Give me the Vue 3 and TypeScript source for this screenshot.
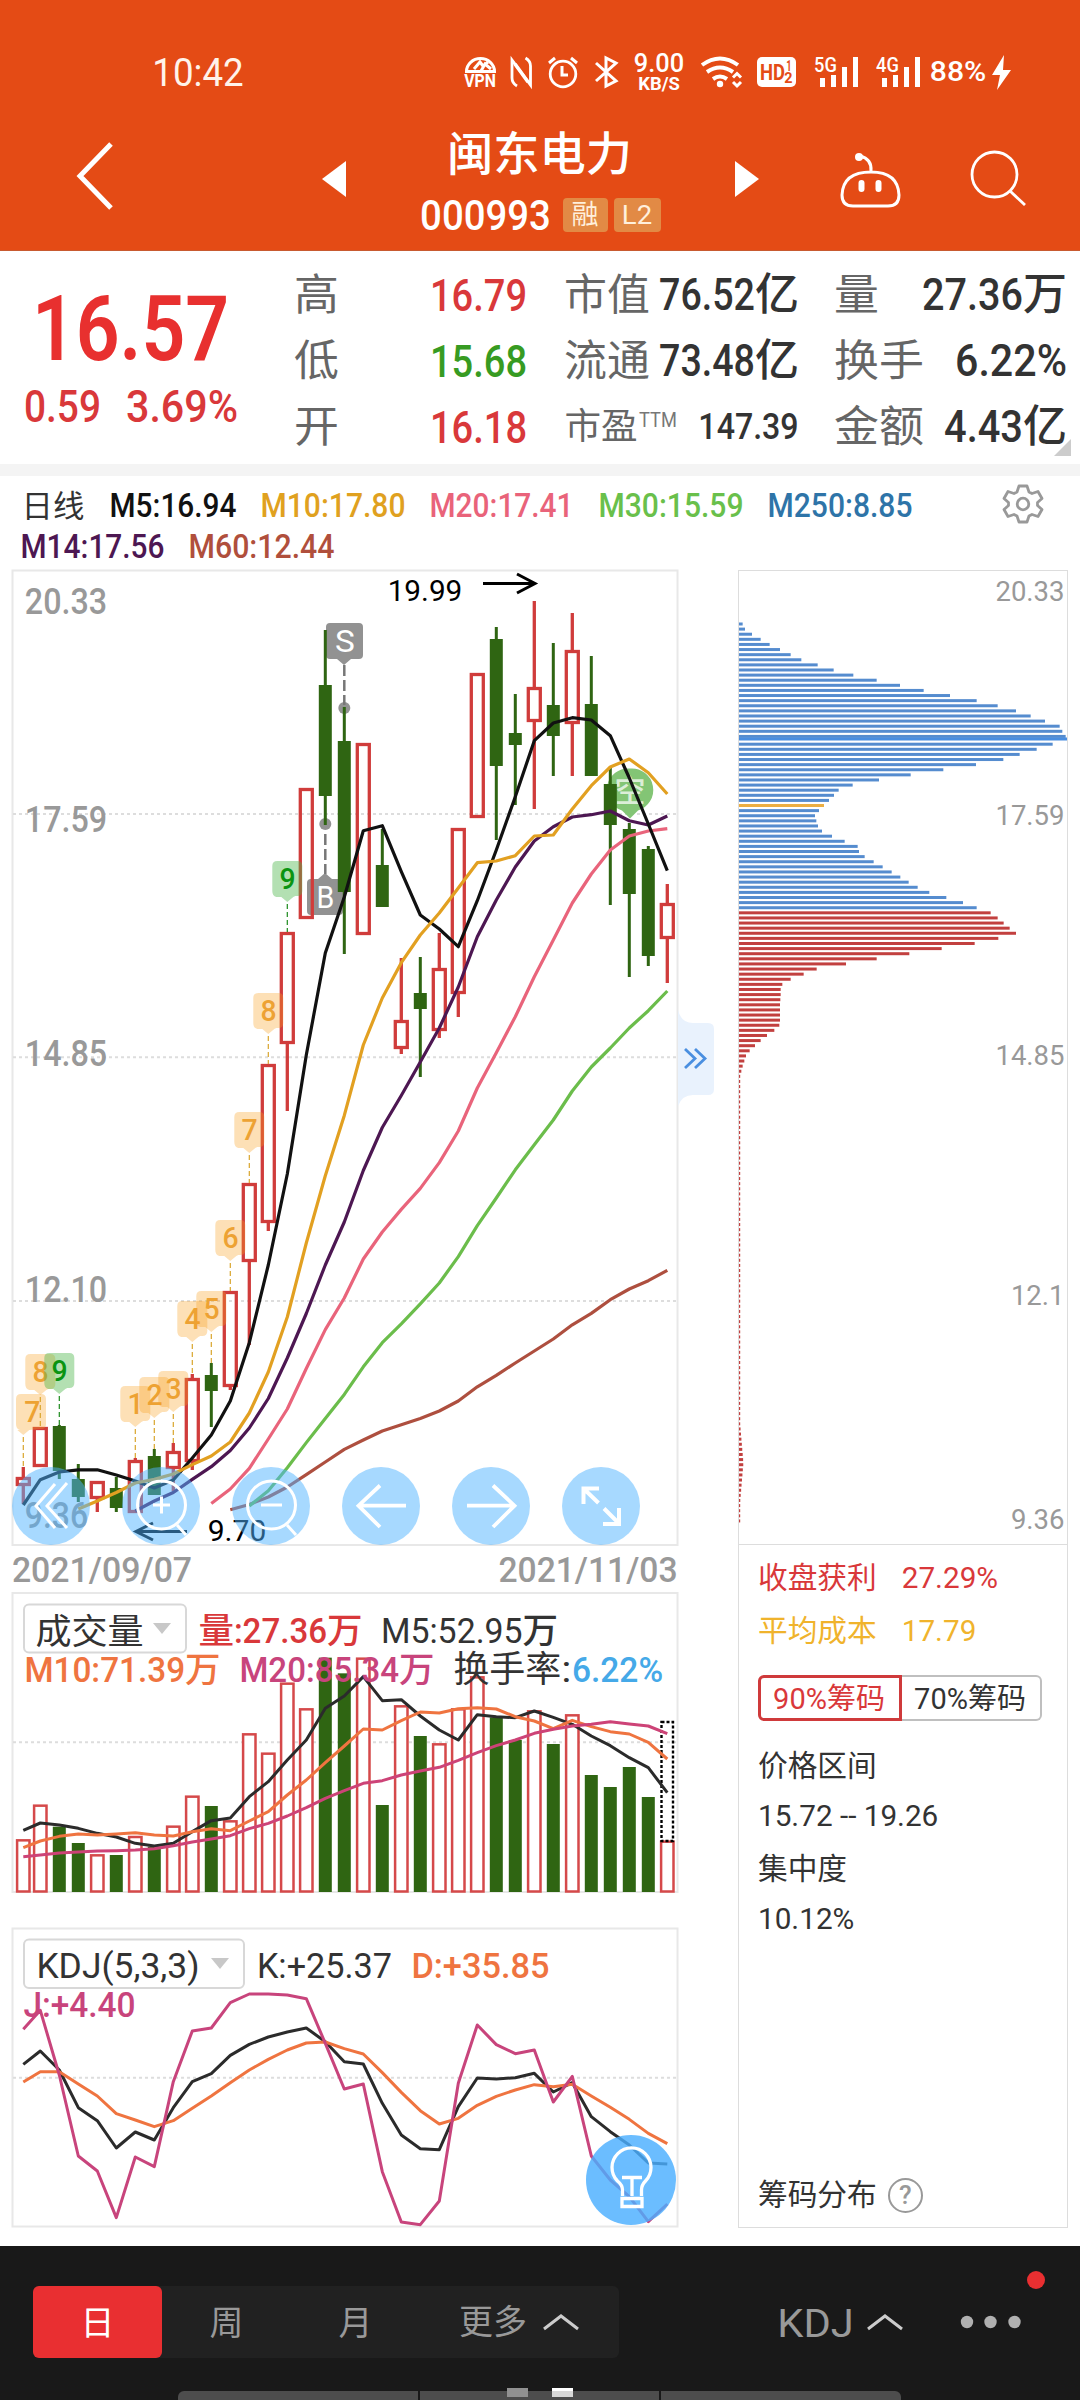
<script setup lang="ts">
import { h } from 'vue'

interface RunProps { t: string; w: number; s: number; c?: string; b?: number; x?: number; y?: number }

// Advance widths used to share the space between the latin runs of a label
const adv = (ch: string) => ('.:,'.includes(ch) ? 0.26 : ch === 'M' ? 0.87 : ch === '%' ? 0.73 : 0.56)

// Text fitted to a given ink width: CJK characters keep their square advance
const Run = (p: RunProps) => {
  const parts = p.t.match(/[\u4e00-\u9fff]+|[^\u4e00-\u9fff]+/g) || []
  const pad = p.s * 0.045
  const isCjk = (s: string) => /[\u4e00-\u9fff]/.test(s)
  const cjk = parts.filter(isCjk).join('').length * p.s
  const latin = parts.filter((s) => !isCjk(s)).join('')
  const units = [...latin].reduce((a, ch) => a + adv(ch), 0)
  const total = p.w + pad * 2
  const cjkW = units ? cjk : total
  let x = (p.x || 0) - pad
  return h('g', { fill: p.c || '#333', 'font-size': p.s, 'font-weight': p.b || 400, 'font-family': "Roboto, 'Noto Sans CJK SC', sans-serif" },
    parts.map((s) => {
      const w = isCjk(s) ? (cjkW * s.length * p.s) / cjk : ((total - cjkW) * [...s].reduce((a, ch) => a + adv(ch), 0)) / units
      const node = h('text', { x, y: p.y || 0, textLength: w, lengthAdjust: 'spacingAndGlyphs' }, s)
      x += w
      return node
    }))
}
const Fit = (p: RunProps) =>
  h('svg', { width: p.w, height: p.s, style: 'display:block;flex:none;overflow:visible' }, [h(Run, { ...p, x: 0, y: p.s * 0.86 })])

const RED = '#d9383a'
const GREEN = '#2f6512'
const DARK = '#333'

const quotes = [
  ['高', '16.79', RED, '市值', '76.52亿', 136, '量', '27.36万', 141],
  ['低', '15.68', '#379b22', '流通', '73.48亿', 136, '换手', '6.22%', 108],
  ['开', '16.18', RED, '市盈', '147.39', 97, '金额', '4.43亿', 119],
] as [string, string, string, string, string, number, string, string, number][]

const cx = (i: number) => (i === 0 ? 23.3 : 21.3 + 19 * i)

// [up?, high, body top, body bottom, low]
const candles = [
  [1, 1467, 1477, 1486, 1504], [1, 1427, 1427, 1467, 1467], [0, 1425, 1426, 1471, 1479], [0, 1464, 1479, 1497, 1502],
  [1, 1481, 1481, 1499, 1512], [0, 1477, 1488, 1508, 1512], [1, 1458, 1460, 1513, 1513], [0, 1449, 1456, 1495, 1495],
  [1, 1443, 1451, 1469, 1491], [1, 1374, 1378, 1462, 1470], [0, 1363, 1375, 1391, 1427], [1, 1291, 1291, 1387, 1390],
  [1, 1183, 1183, 1262, 1345], [1, 1064, 1064, 1223, 1231], [1, 932, 932, 1044, 1111], [1, 788, 788, 919, 919],
  [0, 630, 685, 796, 825], [0, 707, 741, 892, 954], [1, 743, 743, 935, 935], [0, 829, 865, 907, 907],
  [1, 958, 1020, 1049, 1054], [0, 957, 993, 1009, 1077], [1, 933, 968, 1031, 1038], [1, 828, 828, 994, 1017],
  [1, 673, 673, 818, 818], [0, 627, 639, 766, 840], [0, 694, 733, 745, 805], [1, 601, 687, 722, 809],
  [0, 643, 705, 736, 776], [1, 613, 650, 724, 776], [0, 656, 704, 776, 776], [0, 768, 784, 825, 905],
  [0, 823, 829, 894, 977], [0, 846, 849, 956, 966], [1, 884, 903, 939, 983],
]

const pts = (start: number, ys: number[]) => ys.map((y, k) => `${cx(start + k)},${y}`).join(' ')
const mas = [
  { c: '#ae4f3f', p: pts(11, [1509.7, 1504.5, 1497, 1487, 1474.6, 1462, 1449.4, 1440, 1431, 1424.7, 1418.5, 1411, 1401, 1386.8, 1375.4, 1363, 1351, 1339, 1324.8, 1313.4, 1299.7, 1289, 1280.7, 1270.4]) },
  { c: '#6bbd4b', p: pts(12, [1506, 1490.8, 1467.7, 1442.6, 1418.5, 1394.4, 1366.8, 1342.7, 1323.8, 1303.8, 1283, 1256.6, 1225.6, 1198, 1169.8, 1144.7, 1120, 1091, 1067, 1048, 1028, 1010.7, 991]) },
  { c: '#e9647b', p: pts(10, [1503.5, 1489, 1468.4, 1439, 1409, 1368.5, 1329.6, 1298, 1259, 1232, 1209.4, 1188.4, 1162.6, 1131, 1088, 1052.7, 1016.7, 976.7, 940, 903, 874, 850, 836, 831, 828.7]) },
  { c: '#4d1752', p: pts(6, [1511, 1501, 1492.5, 1479.4, 1466.7, 1450.5, 1428, 1398.5, 1358, 1313.5, 1265, 1222, 1170.5, 1127.5, 1095.5, 1062, 1028, 987, 936.7, 900, 867, 841, 826.7, 817, 814.7, 811, 820.7, 825, 816]) },
  { c: '#111', p: pts(0, [1505, 1479.7, 1472, 1469.8, 1469.8, 1475, 1481, 1488, 1480, 1458, 1435, 1401, 1342.7, 1265, 1174, 1055, 953, 897, 830.7, 825.7, 871.7, 915, 929, 946.7, 900.7, 850, 796.7, 740.7, 723, 717.7, 720, 735.7, 778, 824, 870.7]) },
  { c: '#e2a021', p: pts(3, [1509, 1501, 1492.5, 1483, 1479.4, 1474, 1464.6, 1456, 1442, 1413, 1372, 1317, 1243, 1175.7, 1115.4, 1045, 998, 962.7, 935, 913, 888, 862.7, 861, 855.7, 836, 835, 809, 785.7, 767, 759, 772.7, 794]) },
]

// [candle index, digit, box top, dashed line end]
const badges: [number, string, number, number][] = [
  [0, '7', 1394, 1467], [1, '8', 1354, 1427], [2, '9', 1353, 1425], [6, '1', 1386, 1458], [7, '2', 1377, 1449], [8, '3', 1371, 1443],
  [9, '4', 1301, 1374], [10, '5', 1291, 1363], [11, '6', 1220, 1291], [12, '7', 1112, 1183], [13, '8', 993, 1064], [14, '9', 861, 932],
]
const badgePath = (i: number, y: number) => {
  const l = (i === 0 ? 31 : cx(i)) - 15
  const t = cx(i)
  return `M${l + 5} ${y}h20q5 0 5 5v25q0 5-5 5h-2L${Math.max(t + 6, l + 8)} ${y + 36}L${t} ${y + 41}L${t - 6} ${y + 36}H${l + 4}q-4-1-4-6v-25q0-5 5-5z`
}

const axis: [string, number, number][] = [['20.33', 613, 79], ['17.59', 831, 79], ['14.85', 1065.5, 79], ['12.10', 1301, 79], ['9.36', 1527, 60]]

// [up?, bar top] in thirds of a pixel below y = 1580
const vol: [number, number][] = [
  [1, 778], [1, 674], [0, 740], [0, 789], [1, 823], [0, 825], [1, 768], [0, 800], [1, 737], [1, 647], [0, 678], [1, 721], [1, 460], [1, 518],
  [1, 308], [1, 385], [0, 233], [0, 280], [1, 233], [0, 675], [1, 376], [0, 468], [1, 490], [1, 385], [1, 289], [0, 412], [0, 480], [1, 391],
  [0, 492], [1, 403], [0, 585], [0, 621], [0, 561], [0, 651], [1, 782],
]
const vy = (v: number) => 1580 + v / 3
const volLines = [
  { c: '#2b2b2b', v: [751, 729, 735, 745, 760, 771, 790, 798, 790, 755, 722, 714, 650, 605, 540, 480, 385, 348, 290, 362, 359, 408, 450, 480, 404, 410, 413, 393, 412, 433, 468, 497, 533, 563, 638] },
  { c: '#ef7440', v: [803, 783, 769, 762, 765, 762, 758, 765, 768, 755, 746, 752, 723, 695, 645, 600, 548, 498, 447, 450, 422, 396, 399, 386, 383, 387, 410, 423, 446, 421, 440, 455, 462, 487, 537] },
  { c: '#cd4377', v: [830, 825, 819, 816, 813, 812, 810, 806, 797, 786, 777, 767, 746, 730, 708, 683, 655, 632, 610, 602, 585, 573, 562, 541, 518, 497, 480, 460, 448, 438, 433, 425, 432, 438, 461] },
].map((l) => ({ c: l.c, p: pts(0, l.v.map(vy)) }))

const kdj = [
  { c: '#2b2b2b', v: [493, 453, 510, 623, 662, 744, 696, 720, 623, 545, 521, 466, 433, 411, 396, 384, 425, 485, 492, 610, 705, 746, 749, 620, 534, 537, 533, 520, 576, 548, 650, 695, 735, 789, 792] },
  { c: '#ef7440', v: [546, 515, 515, 552, 588, 641, 660, 680, 662, 625, 588, 548, 510, 478, 450, 429, 426, 446, 462, 518, 577, 632, 672, 655, 616, 589, 570, 554, 560, 553, 588, 622, 658, 700, 731] },
  { c: '#c8447c', v: [388, 331, 525, 768, 813, 953, 771, 800, 545, 393, 384, 308, 282, 282, 285, 296, 430, 567, 552, 815, 966, 974, 903, 550, 375, 434, 461, 450, 606, 529, 768, 840, 890, 965, 912] },
].map((l) => ({ c: l.c, p: pts(0, l.v.map((v) => 1900 + v / 3)) }))

// Chip distribution: bar ends, in thirds of a pixel from x = 720
const upper = [68, 75, 96, 122, 149, 180, 212, 244, 293, 341, 400, 470, 540, 611, 690, 770, 833, 888, 932, 975, 1019, 1027, 1037]
const lower = [998, 950, 899, 850, 768, 670, 572, 477, 398, 356, 342, 327, 312, 297, 285, 289, 294, 306, 336, 374, 413, 417, 434, 461, 488, 515, 541, 566, 593, 628, 679, 729, 770,
  812, 833, 851, 869, 888, 835, 764, 665, 568, 470, 378, 290, 251, 212, 187, 182, 182, 181, 180, 180, 180, 180, 178, 163, 141, 122, 105, 89, 78, 73, 68, 64]
const chips: { y: number; w: number; c: string }[] = []
upper.forEach((e, k) => chips.push({ y: 624 + k * 5.11, w: (e - 57) / 3, c: '#558ccf' }))
chips.push({ y: 739, w: 328, c: '#4a8ee0' })
lower.forEach((e, k) => chips.push({ y: 744.2 + k * 5.11, w: (e - 57) / 3, c: k === 12 ? '#ecae42' : k < 33 ? '#558ccf' : '#c2403f' }))
for (let y = 744.2 + lower.length * 5.11; y < 1524; y += 5.11) {
  chips.push({ y, w: Math.max(1.2, 4.4 - Math.abs(y - 1463) / 12), c: '#c2403f' })
}
const chipAxis: [string, number][] = [['20.33', 601], ['17.59', 825], ['14.85', 1065], ['12.1', 1305], ['9.36', 1529]]
</script>

<template>
  <div class="page">
    <header class="top">
      <div class="status">
        <Fit t="10:42" :w="88" :s="38" c="#fff3ea" class="clock" />
        <svg class="sysicons" width="560" height="50" viewBox="460 48 560 50" fill="none" stroke="#fff" stroke-width="3">
          <path d="M466.500 71.500a14 13 0 0 1 28 0z" />
          <path d="M474 69l6-7 3 4 5-4M481 71l4-7 6 5" stroke-width="3" />
          <Run t="VPN" :w="30" :s="18" :b="700" c="#fff" :x="465" :y="87" class="ns" />
          <path d="M517 86q-5-3-5-8V60l18.500 25V66q0-5-5-8" stroke-width="2.800" /><path d="M515 64l13 18" stroke-width="3.500" />
          <circle cx="563" cy="74" r="12.800" stroke-width="2.800" /><path d="M562 66v9h6M549 63l6-5M577 63l-6-5" />
          <path d="M596 63l20 18-10 5V58l10 5-20 18" stroke-width="3" />
          <Run t="9.00" :w="48" :s="25.500" :b="500" c="#fff" :x="635" :y="72" class="ns" />
          <Run t="KB/S" :w="40" :s="18" :b="700" c="#fff" :x="639" :y="90" class="ns" />
          <path d="M702 65q18-13 36 0M707 72q13-9 26 0M713 79q7-5 14 0" stroke-width="4" />
          <circle cx="720" cy="84" r="3.200" fill="#fff" stroke="none" />
          <path d="M733 77.500l4-4 4 4M733 82l4 4 4-4" stroke-width="3" />
          <rect x="757" y="57" width="39" height="30" rx="5" fill="#fff" stroke="none" />
          <Run t="HD" :w="23" :s="22" :b="700" c="#e44b15" :x="761" :y="80" class="ns" />
          <Run t="1" :w="4" :s="14" :b="700" c="#e44b15" :x="787" :y="71" class="ns" />
          <Run t="2" :w="7" :s="14" :b="700" c="#e44b15" :x="785" :y="83" class="ns" />
          <g v-for="(g, k) in ['5G', '4G']" :key="g" :transform="`translate(${k * 62} 0)`">
            <Run :t="g" :w="21" :s="20" :b="500" c="#fff" :x="815" :y="72" class="ns" />
            <path d="M822.500 87v-9M833.500 87v-12M844.500 87v-20M855.500 87v-30" stroke-width="5" />
          </g>
          <Run t="88%" :w="54" :s="27.500" :b="500" c="#fff" :x="931" :y="81" class="ns" />
          <path d="M1004 55l-12 20h8l-3 15 14-20h-8z" fill="#fff" stroke="none" />
        </svg>
      </div>
      <div class="titlebar">
        <svg class="back" width="40" height="68" viewBox="0 0 40 68" fill="none" stroke="#fff" stroke-width="5"><path d="M37 2L6 34l31 32" /></svg>
        <svg class="prev" width="24" height="36" viewBox="0 0 24 36" fill="#fff"><path d="M0 18L24 0v36z" /></svg>
        <div class="title">
          <Fit t="闽东电力" :w="181" :s="46" :b="500" c="#fff" class="name" />
          <div class="code">
            <Fit t="000993" :w="127" :s="42" :b="500" c="#fff" />
            <span class="tag rong">融</span>
            <span class="tag l2"><Fit t="L2" :w="28" :s="26" c="#fff0dc" /></span>
          </div>
        </div>
        <svg class="next" width="24" height="36" viewBox="0 0 24 36" fill="#fff"><path d="M24 18L0 0v36z" /></svg>
        <svg class="robot" width="64" height="60" viewBox="838 150 64 60" fill="none" stroke="#fff" stroke-width="3">
          <path d="M871 172q27 0 28 23 0 11-11 11h-35q-11 0-11-11 1-23 29-23zM871 171q1-12-11-15" /><circle cx="859" cy="157" r="4" fill="#fff" stroke="none" />
          <path d="M861.500 183v6M878.500 183v6" stroke-width="6" stroke-linecap="round" />
        </svg>
        <svg class="search" width="60" height="60" viewBox="968 148 60 60" fill="none" stroke="#fff" stroke-width="2.800"><circle cx="994.500" cy="174.500" r="22.500" /><path d="M1010 191l15 14" /></svg>
      </div>
    </header>

    <section class="quote">
      <div class="price">
        <Fit t="16.57" :w="189" :s="91" :b="600" c="#e8302f" class="last" />
        <div class="change"><Fit t="0.59" :w="73" :s="45" :b="500" :c="RED" /><Fit t="3.69%" :w="108" :s="45" :b="500" :c="RED" /></div>
      </div>
      <div class="cells">
        <div v-for="(q, k) in quotes" :key="k" class="qrow">
          <Fit :t="q[0]" :w="41" :s="43" c="#666" />
          <Fit :t="q[1]" :w="93" :s="45" :b="500" :c="q[2]" class="v1" />
          <div class="mid">
            <Fit :t="q[3]" :w="k === 2 ? 70 : 82" :s="k === 2 ? 36 : 43" c="#666" />
            <Fit v-if="k === 2" t="TTM" :w="36" :s="20" c="#777" class="ttm" />
            <Fit :t="q[4]" :w="q[5]" :s="k === 2 ? 36.5 : 44" :b="500" :c="DARK" class="push" />
          </div>
          <div class="last-col">
            <Fit :t="q[6]" :w="q[6].length > 1 ? 86 : 41" :s="43" c="#666" />
            <Fit :t="q[7]" :w="q[8]" :s="44" :b="500" :c="DARK" class="push" />
          </div>
        </div>
      </div>
      <i class="corner"></i>
    </section>

    <section class="legend">
      <div class="lrow first">
        <Fit t="日线" :w="60" :s="31" :b="400" class="ri" /><Fit t="M5:16.94" :w="124" :s="33" :b="500" c="#111" class="g28" />
        <Fit t="M10:17.80" :w="142" :s="33" :b="500" c="#e0a11f" class="g27" /><Fit t="M20:17.41" :w="141" :s="33" :b="500" c="#e9637a" class="g27" />
        <Fit t="M30:15.59" :w="142" :s="33" :b="500" c="#69c04b" class="g28" /><Fit t="M250:8.85" :w="142" :s="33" :b="500" c="#2e74a8" class="g27" />
        <svg class="gear" width="42" height="42" viewBox="-21 -21 42 42" fill="none" stroke="#999" stroke-width="2.800" stroke-linejoin="round">
          <path d="M-4-18H4L6-12L9-10.500L15-12.500L19-5.500L14.500-1.500V1.500L19 5.500L15 12.500L9 10.500L6 12L4 18H-4L-6 12L-9 10.500L-15 12.500L-19 5.500L-14.500 1.500V-1.500L-19-5.500L-15-12.500L-9-10.500L-6-12Z" /><circle r="5.800" />
        </svg>
      </div>
      <div class="lrow second"><Fit t="M14:17.56" :w="141" :s="33" :b="500" c="#4d1752" /><Fit t="M60:12.44" :w="143" :s="33" :b="500" c="#b04f3c" class="g27" /></div>
    </section>

    <main class="body">
      <div class="charts">
        <svg width="720" height="1022" viewBox="0 568 720 1022" class="chart">
          <rect x="12.500" y="570.500" width="665" height="974.500" fill="#fff" stroke="#e8e8e8" stroke-width="2" />
          <path d="M13 814H677M13 1057.300H677M13 1301H677" stroke="#ddd" stroke-width="2" stroke-dasharray="3 3" />
          <Run v-for="a in axis" :key="a[0]" :t="a[0]" :x="26.500" :y="a[1] + 0.5" :w="a[2]" :s="36.500" :b="500" c="#999" />

          <g fill="#929292">
            <path d="M330 623h29q4 0 4 4v28q0 4-4 4h-8l-7 6-7-6h-7q-4 0-4-4v-28q0-4 4-4z" /><circle cx="344.300" cy="708" r="6" />
            <path d="M311 879h7l7-6 7 6h7q4 0 4 4v28q0 4-4 4h-28q-4 0-4-4v-28q0-4 4-4z" /><circle cx="325.300" cy="824" r="6" />
          </g>
          <path d="M344.300 665V705M325.300 834V874" stroke="#777" stroke-width="2.500" stroke-dasharray="11 4" />
          <Run t="S" :x="336.500" :y="652" :w="17" :s="31" c="#fff" /><Run t="B" :x="318" :y="908" :w="15" :s="31" c="#fff" />
          <path d="M630 768.500a21.500 21.500 0 0 1 8 42l-8 8-8-8a21.500 21.500 0 0 1 8-42z" fill="#83c575" />
          <text x="630" y="802" text-anchor="middle" class="kong">空</text>

          <template v-for="(k, i) in candles" :key="'c' + i">
            <g v-if="k[0]" stroke="#d03c3b" fill="#fff" stroke-width="3.300">
              <path :d="`M${cx(i)} ${k[1]}V${k[2]}M${cx(i)} ${k[3]}V${k[4]}`" />
              <rect :x="cx(i) - 6" :y="k[2] + 1.5" width="12" :height="k[3] - k[2] - 3" fill="none" />
            </g>
            <g v-else :fill="GREEN"><rect :x="cx(i) - 1.5" :y="k[1]" width="3" :height="k[4] - k[1]" /><rect :x="cx(i) - 6.5" :y="k[2]" width="13" :height="k[3] - k[2]" /></g>
          </template>

          <g v-for="(b, i) in badges" :key="'b' + i">
            <path :d="badgePath(b[0], b[2])" :fill="b[1] === '9' ? '#4ab648' : '#faa020'" :fill-opacity="b[1] === '9' ? 0.42 : 0.33" />
            <path :d="`M${cx(b[0])} ${b[2] + 43}V${b[3]}`" :stroke="b[1] === '9' ? '#1c8a1c' : '#d9a52c'" stroke-width="1.200" stroke-dasharray="5 3" />
            <Run :t="b[1]" :x="(b[0] ? cx(b[0]) : 32) - 6.5" :y="b[2] + 28" :w="13.500" :s="29" :b="500" :c="b[1] === '9' ? '#0a9411' : '#eda233'" />
          </g>

          <polyline v-for="m in mas" :key="m.c" :points="m.p" fill="none" :stroke="m.c" stroke-width="3.200" stroke-linejoin="round" />

          <Run t="19.99" :x="389" :y="601" :w="72" :s="29.500" c="#000" />
          <path d="M483 583.500H534M517 574l18 9.500-18 9.500M187 1531.500H137M153 1523l-17 8.500 17 8.500" fill="none" stroke="#000" stroke-width="3" />
          <Run t="9.70" :x="209" :y="1541" :w="56" :s="29.500" c="#000" />

          <path d="M678 1010q3 13 15 13h15q6 0 6 6v60q0 6-6 6h-15q-11 0-15 11z" fill="#e9f2fd" />
          <path d="M685 1049l10 9.500-10 9.500M695 1049l10 9.500-10 9.500" fill="none" stroke="#4a8fe0" stroke-width="2.800" />

          <g fill="#50b4ff" fill-opacity=".5"><circle v-for="x in [51, 161, 271, 381, 491, 601]" :key="x" :cx="x" cy="1506" r="39" /></g>
          <g fill="none" stroke="#fff" stroke-width="3">
            <path d="M55 1484l-19 22 19 22M67 1483l-20 23 20 22" />
            <circle cx="161.500" cy="1505" r="24" /><path d="M153 1505h17M161.500 1496.500v17M177 1525l9 10" />
            <circle cx="271.500" cy="1505" r="24" /><path d="M261 1505h21M287 1525l9 10" />
            <path d="M406 1505.700H359M380 1485.500l-21.500 20.200 21.500 21.300M467 1505.700h47M493 1485.500l21.500 20.200L493 1527" stroke-width="3.800" />
            <path d="M599 1488.500h-15.500V1504M584 1489l14.500 14M603 1524h16V1508M619 1523.500l-15-15" stroke-width="4" />
          </g>
          <Run t="2021/09/07" :x="13.500" :y="1582" :w="177" :s="35.500" :b="500" c="#999" />
          <Run t="2021/11/03" :x="500" :y="1582" :w="176" :s="35.500" :b="500" c="#999" />
        </svg>

        <svg width="720" height="310" viewBox="0 1590 720 310" class="chart">
          <rect x="12.500" y="1593" width="665" height="299" fill="#fff" stroke="#e8e8e8" stroke-width="2" />
          <path d="M13 1742.300H677" stroke="#ddd" stroke-width="2" stroke-dasharray="3 3" />
          <template v-for="(v, i) in vol" :key="i">
            <rect v-if="v[0]" :x="cx(i) - 6.2" :y="vy(v[1]) + 1" width="12.400" :height="1891.500 - vy(v[1]) - 1" fill="#fff" stroke="#d5494a" stroke-width="2.500" />
            <rect v-else :x="cx(i) - 6.5" :y="vy(v[1])" width="13" :height="1892 - vy(v[1])" :fill="GREEN" />
          </template>
          <rect x="661.500" y="1722" width="11.500" height="119" fill="none" stroke="#000" stroke-width="2.400" stroke-dasharray="3 2" />
          <polyline v-for="m in volLines" :key="m.c" :points="m.p" fill="none" :stroke="m.c" stroke-width="3" stroke-linejoin="round" />
          <rect x="24" y="1604.500" width="162" height="48" rx="5" fill="#fff" stroke="#d8d8d8" stroke-width="2" />
          <Run t="成交量" :x="37" :y="1644" :w="105" :s="35.500" /><path d="M153 1623h18l-9 11z" fill="#c8c8c8" />
          <Run t="量:27.36万" :x="200" :y="1642.500" :w="161" :s="35.500" :b="500" :c="RED" />
          <Run t="M5:52.95万" :x="382.500" :y="1642.500" :w="174" :s="35.500" :b="450" />
          <Run t="M10:71.39万" :x="26" :y="1682" :w="193" :s="35.500" :b="500" c="#ef7440" />
          <Run t="M20:85.34万" :x="241" :y="1682" :w="192" :s="35.500" :b="500" c="#c8447c" />
          <Run t="换手率:" :x="455" :y="1682" :w="115" :s="36" />
          <Run t="6.22%" :x="573.500" :y="1682" :w="88" :s="35.500" :b="500" c="#45a9e8" />
        </svg>

        <svg width="720" height="346" viewBox="0 1900 720 346" class="chart">
          <rect x="12.500" y="1928.500" width="665" height="298" fill="#fff" stroke="#e8e8e8" stroke-width="2" />
          <path d="M13 2077.700H677" stroke="#ddd" stroke-width="2" stroke-dasharray="3 3" />
          <rect x="24" y="1939.500" width="220" height="48.500" rx="5" fill="#fff" stroke="#d8d8d8" stroke-width="2" />
          <Run t="KDJ(5,3,3)" :x="38" :y="1978" :w="160" :s="35.500" /><path d="M211 1958h18l-9 11z" fill="#c8c8c8" />
          <Run t="K:+25.37" :x="258.500" :y="1978" :w="132" :s="35.500" :b="450" />
          <Run t="D:+35.85" :x="413" :y="1978" :w="135" :s="35.500" :b="500" c="#ef7440" />
          <Run t="J:+4.40" :x="25" :y="2016.500" :w="109" :s="35.500" :b="500" c="#c8447c" />
          <polyline v-for="m in kdj" :key="m.c" :points="m.p" fill="none" :stroke="m.c" stroke-width="3" stroke-linejoin="round" />
          <circle cx="631" cy="2180" r="45" fill="#4aafff" fill-opacity=".82" />
          <g fill="none" stroke="#fff" stroke-width="3.300">
            <path d="M622.500 2196v-6q0-5-5-9a19.500 19.500 0 1 1 28 0q-4 4-4 9v6M622 2198.500h20v8h-20zM622 2177.500h20M632 2178v18" />
          </g>
        </svg>
      </div>

      <aside class="chips">
        <svg width="330" height="974" viewBox="738 570 330 974" class="chart">
          <rect v-for="(b, i) in chips" :key="i" x="739" :y="b.y - 1.5" :width="b.w" height="3" :fill="b.c" />
          <text v-for="a in chipAxis" :key="a[0]" x="1064.500" :y="a[1]" text-anchor="end" class="chiplab">{{ a[0] }}</text>
        </svg>
        <div class="info">
          <p class="red pair"><span>收盘获利</span><span>27.29%</span></p>
          <p class="gold pair"><span>平均成本</span><span>17.79</span></p>
          <div class="seg"><span class="on">90%筹码</span><span>70%筹码</span></div>
          <p class="r1">价格区间</p><p class="r2">15.72 -- 19.26</p><p class="r3">集中度</p><p class="r4">10.12%</p>
          <p class="foot">筹码分布<span class="q">?</span></p>
        </div>
      </aside>
    </main>

    <footer class="bar">
      <div class="tabs">
        <span class="tab active">日</span><span class="tab">周</span><span class="tab">月</span>
        <span class="tab more">更多<svg width="38" height="18" viewBox="0 0 38 18" fill="none" stroke="#ccc" stroke-width="3"><path d="M2 16L19 3l17 13" /></svg></span>
      </div>
      <div class="ind"><Fit t="KDJ" :w="73" :s="39" c="#999" /><svg width="38" height="18" viewBox="0 0 38 18" fill="none" stroke="#ccc" stroke-width="3"><path d="M2 16L19 3l17 13" /></svg></div>
      <svg class="dots" width="90" height="100" viewBox="960 2270 90 100" fill="#b0b0b0"><circle cx="967" cy="2322" r="6.200" /><circle cx="990.500" cy="2322" r="6.200" /><circle cx="1014.500" cy="2322" r="6.200" /><circle cx="1036" cy="2280" r="9" fill="#e92f31" /></svg>
      <div class="dock"><i></i><i></i><i></i><b class="s1"></b><b class="s2"></b></div>
    </footer>
  </div>
</template>

<style>
body { margin: 0; background: #fff; }
</style>

<style scoped>
.page { width: 1080px; height: 2400px; overflow: hidden; background: #fff; font-family: Roboto, 'Noto Sans CJK SC', sans-serif; color: #333; display: flex; flex-direction: column; }
svg { display: block; flex: none; }
.top { height: 251px; background: #e44b15; box-sizing: border-box; border-bottom: 1px solid #c85a30; flex: none; }
.status { height: 98px; display: flex; align-items: flex-start; padding-left: 154px; box-sizing: border-box; }
.clock { margin-top: 53px; }
.sysicons { margin: 48px 0 0 218px; }
.ns { stroke: none; }
.titlebar { display: flex; align-items: flex-start; height: 152px; }
.back { margin: 44px 0 0 74px; }
.prev { margin: 63px 0 0 208px; }
.title { width: 240px; margin: 32px 0 0 75px; display: flex; flex-direction: column; align-items: center; }
.name { margin-left: -3px; }
.code { display: flex; align-items: center; margin-top: 18px; }
.tag { height: 34px; border-radius: 4px; background: #e28a45; color: #fff0dc; font-size: 27px; line-height: 33px; display: flex; align-items: center; justify-content: center; }
.rong { width: 45px; margin-left: 14px; }
.l2 { width: 47px; margin-left: 6px; }
.next { margin: 63px 0 0 74px; }
.robot { margin: 52px 0 0 79px; }
.search { margin: 50px 0 0 66px; }
.quote { height: 213px; display: flex; position: relative; flex: none; border-bottom: 12px solid #f4f4f4; }
.price { width: 296px; flex: none; }
.last { margin: 31px 0 0 36px; }
.change { display: flex; gap: 29px; margin: 10px 0 0 26px; }
.cells { padding-top: 10px; }
.qrow { height: 66px; display: flex; align-items: center; }
.v1 { margin-left: 95px; }
.mid { display: flex; align-items: center; width: 231px; margin-left: 41px; }
.push { margin-left: auto !important; }
.ttm { margin: 0 0 12px 4px; }
.last-col { display: flex; align-items: center; width: 229px; margin-left: 39px; }
.corner { position: absolute; right: 9px; bottom: 8px; border-style: solid; border-width: 0 0 17px 17px; border-color: transparent transparent #ccc; }
.legend { height: 92px; flex: none; box-sizing: border-box; padding-top: 9px; }
.lrow { display: flex; align-items: center; height: 41px; }
.first { padding-left: 23px; }
.second { padding-left: 22px; }
.g27 { margin-left: 27px; } .g28 { margin-left: 28px; }
.gear { margin: 0 0 4px 91px; }
.body { display: flex; height: 1678px; flex: none; }
.charts { width: 720px; flex: none; }
.kong { font: 500 31px 'Noto Sans CJK SC', sans-serif; fill: #fff; fill-opacity: .72; }
.chips { margin: 2px 0 0 18px; width: 328px; height: 1656px; border: 1px solid #ddd; display: flex; flex-direction: column; }
.chips > svg { margin: -1px 0 0 -1px; }
.chiplab { font: 400 27.500px Roboto, sans-serif; fill: #999; }
.info { flex: 1; border-top: 1px solid #ddd; padding-left: 19px; font-size: 29.700px; display: flex; flex-direction: column; }
.info p { margin: 0; line-height: 40px; height: 40px; white-space: pre; }
.pair { display: flex; gap: 25px; }
.red { color: #d9383a; margin-top: 13px !important; }
.gold { color: #f0b32c; margin-top: 13px !important; }
.seg { display: flex; width: 284px; height: 46px; margin: 24px 0 0 0; line-height: 44px; text-align: center; }
.seg span { box-sizing: border-box; flex: 1; border: 2px solid #bfbfbf; border-left: 0; border-radius: 0 6px 6px 0; font-size: 29px; padding-right: 2px; }
.seg .on { border: 3px solid #cf3a3b; border-radius: 6px 0 0 6px; color: #d9383a; line-height: 42px; }
.r1 { margin-top: 25px !important; } .r2 { margin-top: 10px !important; } .r3 { margin-top: 13px !important; } .r4 { margin-top: 10px !important; }
.info .foot { margin-top: auto; margin-bottom: 12px; display: flex; align-items: center; }
.q { width: 31px; height: 31px; border: 2.500px solid #999; border-radius: 50%; color: #999; font-size: 26px; font-weight: 500; line-height: 31px; text-align: center; margin-left: 11px; }
.bar { height: 154px; flex: none; background: #191919; position: relative; display: flex; align-items: flex-start; }
.tabs { display: flex; width: 586px; height: 72px; margin: 40px 0 0 33px; background: #212121; border-radius: 6px; }
.tab { width: 129px; line-height: 75px; text-align: center; font-size: 34px; color: #999; }
.tab.active { background: #e92f31; color: #fff; border-radius: 6px; }
.more { flex: 1; width: auto; display: flex; align-items: center; padding-left: 39px; }
.more svg { margin-left: 15px; }
.ind { display: flex; align-items: center; height: 72px; margin: 40px 0 0 160px; gap: 14px; }
.dots { margin: 24px 0 0 56px; }
.dock { position: absolute; left: 178px; bottom: 0; width: 723px; height: 9px; display: flex; gap: 2px; }
.dock i { flex: 1; background: #4d4d4d; }
.dock i:first-child { border-radius: 6px 0 0 0; }
.dock i:nth-child(3) { border-radius: 0 6px 0 0; }
.dock b { position: absolute; top: -3px; width: 21px; height: 9px; }
.s1 { left: 329px; background: #919191; }
.s2 { left: 374px; background: linear-gradient(#fff 3px, #d8d8d8 3px); }
</style>
